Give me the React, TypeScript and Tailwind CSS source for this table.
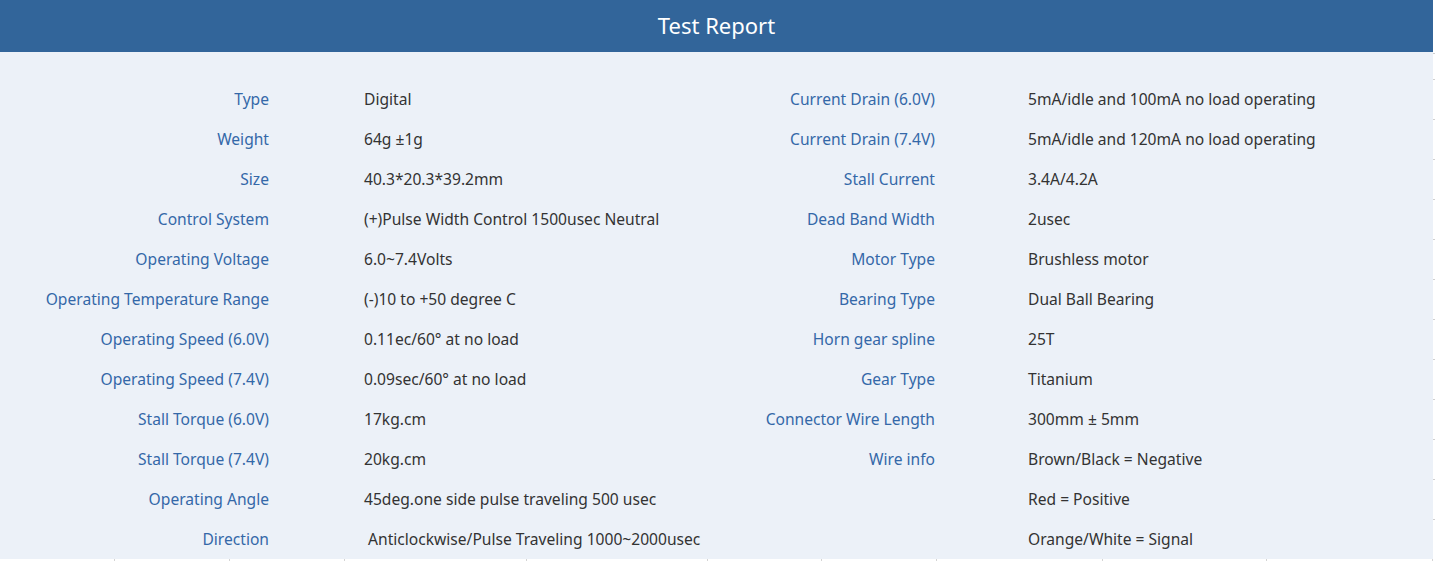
import React from "react"

interface SpecRow {
    label1: string,
    value1: string,
    label2: string,
    value2: string
};

const rows: SpecRow[] = [
    { label1: "Type", value1: "Digital", label2: "Current Drain (6.0V)", value2: "5mA/idle and 100mA no load operating" },
    { label1: "Weight", value1: "64g ±1g", label2: "Current Drain (7.4V)", value2: "5mA/idle and 120mA no load operating" },
    { label1: "Size", value1: "40.3*20.3*39.2mm", label2: "Stall Current", value2: "3.4A/4.2A" },
    { label1: "Control System", value1: "(+)Pulse Width Control 1500usec Neutral", label2: "Dead Band Width", value2: "2usec" },
    { label1: "Operating Voltage", value1: "6.0~7.4Volts", label2: "Motor Type", value2: "Brushless motor" },
    { label1: "Operating Temperature Range", value1: "(-)10 to +50 degree C", label2: "Bearing Type", value2: "Dual Ball Bearing" },
    { label1: "Operating Speed (6.0V)", value1: "0.11ec/60° at no load", label2: "Horn gear spline", value2: "25T" },
    { label1: "Operating Speed (7.4V)", value1: "0.09sec/60° at no load", label2: "Gear Type", value2: "Titanium" },
    { label1: "Stall Torque (6.0V)", value1: "17kg.cm", label2: "Connector Wire Length", value2: "300mm ± 5mm" },
    { label1: "Stall Torque (7.4V)", value1: "20kg.cm", label2: "Wire info", value2: "Brown/Black = Negative" },
    { label1: "Operating Angle", value1: "45deg.one side pulse traveling 500 usec", label2: "", value2: "Red = Positive" },
    { label1: "Direction", value1: "\u00a0Anticlockwise/Pulse Traveling 1000~2000usec", label2: "", value2: "Orange/White = Signal" },
];

// widths of the faint table cells showing under the panel
const bottomCells = [115, 115, 115, 182, 181, 114, 115, 166, 164, 166];

export default function App() {
    return (
        <div className="w-[1435px] h-[561px] bg-white overflow-hidden flex" style={{ fontFamily: '"Noto Sans", "Open Sans", sans-serif' }}>
            <div className="w-[1433px]">
                {/* header */}
                <div className="h-[52px] bg-[#32659a] flex items-center justify-center pb-[2px]">
                    <h1 className="text-white text-[22px] leading-none">Test Report</h1>
                </div>

                {/* spec table */}
                <div className="bg-[#ecf1f8] pt-[27px]">
                    {rows.map((row, i) => (
                        <div key={i} className="grid grid-cols-[269px_371px_295px_1fr] h-[40px] pt-[2px] items-center text-[15.6px] whitespace-nowrap">
                            <div className="text-right text-[#3468a8]">{row.label1}</div>
                            <div className="pl-[95px] text-[#333333]">{row.value1}</div>
                            <div className="text-right text-[#3468a8]">{row.label2}</div>
                            <div className="pl-[93px] text-[#333333]">{row.value2}</div>
                        </div>
                    ))}
                </div>

                {/* bottom rule with cell ticks */}
                <div className="h-[2px] flex">
                    {bottomCells.map((w, i) => (
                        <div key={i} className="h-full border-r border-[#d4d4d4]" style={{ width: w }}></div>
                    ))}
                </div>
            </div>

            {/* right edge with row ticks */}
            <div className="w-[2px] pt-[53px] flex flex-col">
                <div className="h-[26px] border-t border-[#cfcfcf]"></div>
                {Array.from({ length: 12 }).map((_, i) => (
                    <div key={i} className="h-[40px] border-t border-[#cfcfcf]"></div>
                ))}
            </div>
        </div>
    )
}
